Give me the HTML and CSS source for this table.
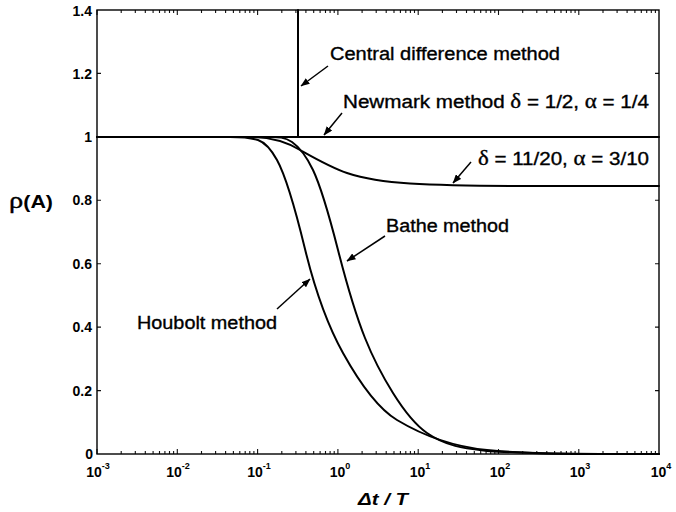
FILE: index.html
```html
<!DOCTYPE html>
<html lang="en">
<head>
<meta charset="utf-8">
<title>Spectral radius plot</title>
<link rel="stylesheet" href="styles.css">
</head>
<body>
<main class="figure">
<svg class="chart" width="676" height="512" viewBox="0 0 676 512" xmlns="http://www.w3.org/2000/svg">
  <defs>
    <marker id="ah" markerWidth="9" markerHeight="7" refX="8.5" refY="3.5" orient="auto" markerUnits="userSpaceOnUse">
      <path d="M0,0 L9,3.5 L0,7 Z" class="head"/>
    </marker>
    <path id="decb" d="M0 0v-5 M24.2 0v-3 M38.3 0v-3 M48.3 0v-3 M56.1 0v-3 M62.5 0v-3 M67.9 0v-3 M72.5 0v-3 M76.6 0v-3"/>
    <path id="dect" d="M0 0v5 M24.2 0v3 M38.3 0v3 M48.3 0v3 M56.1 0v3 M62.5 0v3 M67.9 0v3 M72.5 0v3 M76.6 0v3"/>
  </defs>

  <g class="ticks">
    <use href="#decb" x="97" y="454"/>
    <use href="#decb" x="177.3" y="454"/>
    <use href="#decb" x="257.6" y="454"/>
    <use href="#decb" x="337.9" y="454"/>
    <use href="#decb" x="418.2" y="454"/>
    <use href="#decb" x="498.5" y="454"/>
    <use href="#decb" x="578.8" y="454"/>
    <use href="#dect" x="97" y="10"/>
    <use href="#dect" x="177.3" y="10"/>
    <use href="#dect" x="257.6" y="10"/>
    <use href="#dect" x="337.9" y="10"/>
    <use href="#dect" x="418.2" y="10"/>
    <use href="#dect" x="498.5" y="10"/>
    <use href="#dect" x="578.8" y="10"/>
    <path d="M97 73.4h4 M97 136.9h4 M97 200.3h4 M97 263.7h4 M97 327.1h4 M97 390.6h4
             M659 73.4h-4 M659 136.9h-4 M659 200.3h-4 M659 263.7h-4 M659 327.1h-4 M659 390.6h-4"/>
  </g>

  <rect class="frame" x="97" y="10" width="562" height="444"/>

  <g class="curves">
    <path d="M97 137 H659"/>
    <path d="M298 10 V137"/>
    <!-- Houbolt -->
    <path d="M97 137 L230 137
             C239.3 137 248.7 137.2 258 140
             C264.3 142.2 270.7 148.6 277 160
             C286.3 176.8 295.7 210.7 305 249
             C317.7 301 330.3 330.2 343 353
             C361 385.4 379 409.2 397 420
             C427 438 457 447 487 450
             C524.7 453.8 562.3 454 600 454
             L659 454"/>
    <!-- Bathe -->
    <path d="M97 137 L270 137
             C277.3 137 284.7 136.9 292 142
             C299 146.9 306 155.3 313 170
             C321.3 187.5 329.7 217.5 338 250
             C347 285.1 356 315.5 365 338
             C374.3 361.3 383.7 378.1 393 393
             C404.3 411.1 415.7 425.1 427 433
             C447 447 467 448.6 487 451
             C524.7 453.3 562.3 454 600 454
             L659 454"/>
    <!-- Newmark delta = 11/20 -->
    <path d="M97 137 L250 137
             C266.7 137 283.3 140 300 150
             C315.7 158.8 331.3 167.8 347 173
             C368 179.9 389 182.2 410 183.5
             C446.7 185.7 483.3 185.9 520 186
             L659 186"/>
  </g>

  <g class="arrows">
    <line x1="328" y1="66" x2="301" y2="86" marker-end="url(#ah)"/>
    <line x1="342" y1="113" x2="324" y2="135" marker-end="url(#ah)"/>
    <line x1="471" y1="162" x2="453" y2="183" marker-end="url(#ah)"/>
    <line x1="385" y1="236" x2="347" y2="261" marker-end="url(#ah)"/>
    <line x1="277" y1="309" x2="310" y2="279" marker-end="url(#ah)"/>
  </g>

  <g class="notes">
    <text x="330" y="60" textLength="230" lengthAdjust="spacingAndGlyphs">Central difference method</text>
    <text x="343" y="108" textLength="306" lengthAdjust="spacingAndGlyphs">Newmark method <tspan class="greek">δ</tspan> = 1/2, <tspan class="greek">α</tspan> = 1/4</text>
    <text x="478" y="165" textLength="171" lengthAdjust="spacingAndGlyphs"><tspan class="greek">δ</tspan> = 11/20, <tspan class="greek">α</tspan> = 3/10</text>
    <text x="386" y="232" textLength="123" lengthAdjust="spacingAndGlyphs">Bathe method</text>
    <text x="137" y="329" textLength="140" lengthAdjust="spacingAndGlyphs">Houbolt method</text>
  </g>

  <g class="ylabels">
    <text x="92" y="16">1.4</text>
    <text x="92" y="79">1.2</text>
    <text x="92" y="142">1</text>
    <text x="92" y="205">0.8</text>
    <text x="92" y="269">0.6</text>
    <text x="92" y="332">0.4</text>
    <text x="92" y="396">0.2</text>
    <text x="93" y="459">0</text>
  </g>

  <g class="xlabels">
    <text x="98" y="477">10<tspan class="sup" dy="-8">-3</tspan></text>
    <text x="178" y="477">10<tspan class="sup" dy="-8">-2</tspan></text>
    <text x="259" y="477">10<tspan class="sup" dy="-8">-1</tspan></text>
    <text x="340" y="477">10<tspan class="sup" dy="-8">0</tspan></text>
    <text x="420" y="477">10<tspan class="sup" dy="-8">1</tspan></text>
    <text x="500" y="477">10<tspan class="sup" dy="-8">2</tspan></text>
    <text x="580" y="477">10<tspan class="sup" dy="-8">3</tspan></text>
    <text x="661" y="477">10<tspan class="sup" dy="-8">4</tspan></text>
  </g>

  <text class="ytitle" x="9" y="208" textLength="44" lengthAdjust="spacingAndGlyphs"><tspan class="rho">ρ</tspan>(A)</text>
  <text class="xtitle" x="358" y="505" textLength="50" lengthAdjust="spacingAndGlyphs">Δ<tspan>t</tspan> / <tspan>T</tspan></text>
</svg>
</main>
</body>
</html>
```

FILE: styles.css
```css
html, body {
  margin: 0;
  padding: 0;
  background: #fff;
}

.figure {
  display: block;
  width: 676px;
  height: 512px;
}

.chart {
  display: block;
}

.ticks path,
.ticks use {
  fill: none;
  stroke: #111;
  stroke-width: 1.1;
}

.frame {
  fill: none;
  stroke: #000;
  stroke-width: 1.4;
}

.curves path {
  fill: none;
  stroke: #000;
  stroke-width: 2;
  stroke-linejoin: round;
  stroke-linecap: round;
}

.arrows line {
  stroke: #000;
  stroke-width: 1.5;
}

.head {
  fill: #000;
}

.notes text {
  font-family: "Liberation Sans", Arial, sans-serif;
  font-size: 18px;
  fill: #000;
  stroke: #000;
  stroke-width: 0.35;
}

.greek {
  font-family: "Liberation Serif", "DejaVu Serif", serif;
  font-size: 20px;
}

.ylabels text {
  font-family: "Liberation Sans", Arial, sans-serif;
  font-weight: bold;
  font-size: 14px;
  text-anchor: end;
  fill: #000;
}

.xlabels text {
  font-family: "Liberation Sans", Arial, sans-serif;
  font-weight: bold;
  font-size: 14px;
  text-anchor: middle;
  fill: #000;
}

.xlabels .sup {
  font-size: 9px;
}

.ytitle {
  font-family: "Liberation Sans", Arial, sans-serif;
  font-weight: bold;
  font-size: 18px;
  fill: #000;
}

.ytitle .rho {
  font-family: "Liberation Serif", "DejaVu Serif", serif;
  font-weight: normal;
  font-size: 24px;
  stroke: #000;
  stroke-width: 0.4;
}

.xtitle {
  font-family: "Liberation Sans", Arial, sans-serif;
  font-style: italic;
  font-weight: bold;
  font-size: 17px;
  fill: #000;
}
```
